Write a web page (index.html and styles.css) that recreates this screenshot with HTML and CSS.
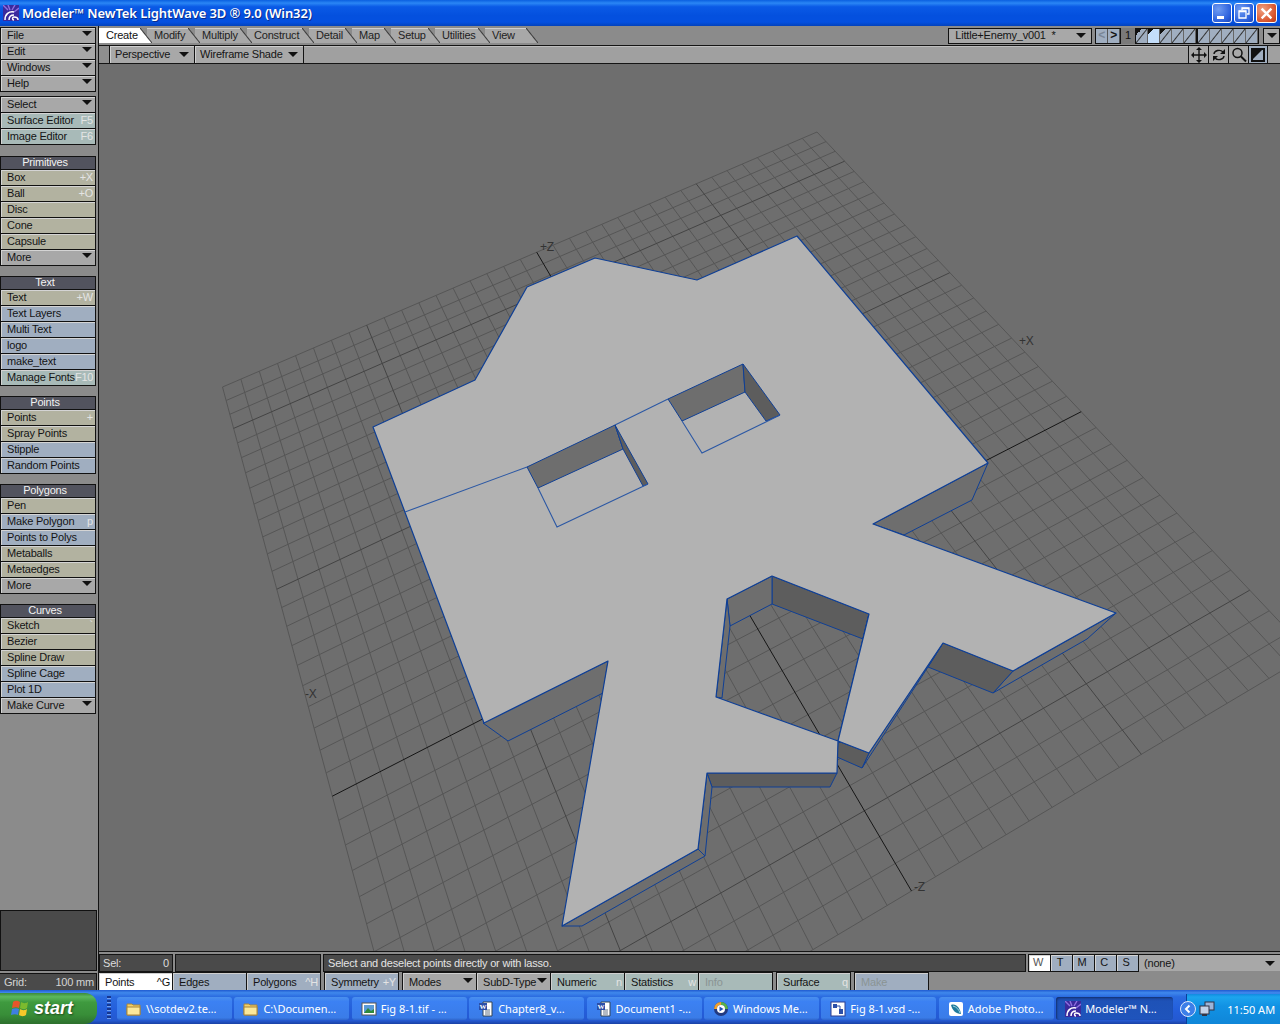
FILE: index.html
```html
<!DOCTYPE html>
<html lang="en">
<head>
    <meta charset="UTF-8">
    <title>Modeler NewTek LightWave 3D 9.0</title>
    <link rel="stylesheet" href="styles.css">
</head>
<body>
<div class="window">

    <!-- XP title bar -->
    <div class="titlebar">
        <svg class="lw-icon" viewBox="0 0 16 16"><rect width="16" height="16" fill="#3a2a9c"/><path d="M0 0l5 5M5 0l2 5M12 0l-3 5M16 3l-5 4" stroke="#8f6fe0" stroke-width="1.4"/><path d="M2 15c0-6 4-9 9-8M6 15c0-4 2-5 5-5M11 15c-2 0-2-3 0-3s4 1 4 3" fill="none" stroke="#fff" stroke-width="1.5"/></svg>
        <span class="title-text">Modeler™ NewTek LightWave 3D ® 9.0 (Win32)</span>
        <div class="win-buttons">
            <div class="win-btn"><span class="min-glyph"></span></div>
            <div class="win-btn"><svg viewBox="0 0 12 12" width="12" height="12"><path d="M4 3V1h7v6H9M1 4h7v7H1z" fill="none" stroke="#fff" stroke-width="1.3"/><path d="M4 1.5h7M1 4.5h7" stroke="#fff" stroke-width="1.6"/></svg></div>
            <div class="win-btn close"><svg viewBox="0 0 12 12" width="13" height="13"><path d="M1.5 1.5l9 9M10.5 1.5l-9 9" stroke="#fff" stroke-width="2.2"/></svg></div>
        </div>
    </div>

    <div class="workarea">

        <!-- left tool column -->
        <div class="sidebar">
            <div class="group first">
                <div class="btn grey">File<i class="arrow"></i></div>
                <div class="btn grey">Edit<i class="arrow"></i></div>
                <div class="btn grey">Windows<i class="arrow"></i></div>
                <div class="btn grey">Help<i class="arrow"></i></div>
            </div>
            <div class="group second">
                <div class="btn grey">Select<i class="arrow"></i></div>
                <div class="btn teal">Surface Editor<span class="key">F5</span></div>
                <div class="btn teal">Image Editor<span class="key">F6</span></div>
            </div>
            <div class="group third">
                <div class="heading">Primitives</div>
                <div class="btn tan">Box<span class="key">+X</span></div>
                <div class="btn tan">Ball<span class="key">+O</span></div>
                <div class="btn tan">Disc</div>
                <div class="btn tan">Cone</div>
                <div class="btn tan">Capsule</div>
                <div class="btn grey">More<i class="arrow"></i></div>
            </div>
            <div class="group">
                <div class="heading">Text</div>
                <div class="btn tan">Text<span class="key">+W</span></div>
                <div class="btn blue">Text Layers</div>
                <div class="btn blue">Multi Text</div>
                <div class="btn blue">logo</div>
                <div class="btn blue">make_text</div>
                <div class="btn teal">Manage Fonts<span class="key">F10</span></div>
            </div>
            <div class="group">
                <div class="heading">Points</div>
                <div class="btn tan">Points<span class="key">+</span></div>
                <div class="btn tan">Spray Points</div>
                <div class="btn blue">Stipple</div>
                <div class="btn blue">Random Points</div>
            </div>
            <div class="group">
                <div class="heading">Polygons</div>
                <div class="btn tan">Pen</div>
                <div class="btn blue">Make Polygon<span class="key">p</span></div>
                <div class="btn blue">Points to Polys</div>
                <div class="btn tan">Metaballs</div>
                <div class="btn tan">Metaedges</div>
                <div class="btn grey">More<i class="arrow"></i></div>
            </div>
            <div class="group">
                <div class="heading">Curves</div>
                <div class="btn tan">Sketch<span class="key">`</span></div>
                <div class="btn tan">Bezier</div>
                <div class="btn tan">Spline Draw</div>
                <div class="btn blue">Spline Cage</div>
                <div class="btn blue">Plot 1D</div>
                <div class="btn grey">Make Curve<i class="arrow"></i></div>
            </div>
            <div class="preview"></div>
            <div class="grid-size"><span>Grid:</span><span>100 mm</span></div>
        </div>

        <div class="main">
            <!-- tab row plus the object and layer controls -->
            <div class="tabrow">
                <div class="tabs">
                    <div class="tab active">Create</div>
                    <div class="tab">Modify</div>
                    <div class="tab">Multiply</div>
                    <div class="tab">Construct</div>
                    <div class="tab">Detail</div>
                    <div class="tab">Map</div>
                    <div class="tab">Setup</div>
                    <div class="tab">Utilities</div>
                    <div class="tab">View</div>
                </div>
                <div class="object-select">Little+Enemy_v001 &nbsp;*<i class="arrow"></i></div>
                <div class="layer-nav">
                    <div class="nav-btn off">&lt;</div>
                    <div class="nav-btn">&gt;</div>
                </div>
                <div class="layer-num">1</div>
                <div class="layers">
                    <div class="layer fg"></div>
                    <div class="layer bg"></div>
                    <div class="layer fg"></div>
                    <div class="layer"></div>
                    <div class="layer"></div>
                </div>
                <div class="layers next">
                    <div class="layer"></div>
                    <div class="layer"></div>
                    <div class="layer"></div>
                    <div class="layer"></div>
                    <div class="layer"></div>
                </div>
                <div class="layer-menu"><i class="arrow"></i></div>
            </div>

            <!-- viewport toolbar -->
            <div class="viewbar">
                <div class="vb-first"></div>
                <div class="vb-select persp">Perspective<i class="arrow"></i></div>
                <div class="vb-select shade">Wireframe Shade<i class="arrow"></i></div>
                <div class="vb-fill"></div>
                <div class="vb-icon"><svg viewBox="0 0 16 16" width="16" height="16"><path d="M8 1v14M1 8h14" stroke="#111" stroke-width="1.4"/><path d="M8 0l3 3H5zM8 16l3-3H5zM0 8l3-3v6zM16 8l-3-3v6z" fill="#111"/></svg></div>
                <div class="vb-icon"><svg viewBox="0 0 16 16" width="16" height="16"><path d="M3 7a5 4 0 0 1 9-2M13 9a5 4 0 0 1-9 2" fill="none" stroke="#111" stroke-width="1.4"/><path d="M14 2v5h-5zM2 14V9h5z" fill="#111"/></svg></div>
                <div class="vb-icon"><svg viewBox="0 0 16 16" width="16" height="16"><circle cx="6.500" cy="6" r="4.500" fill="none" stroke="#111" stroke-width="1.500"/><path d="M10 9.500l5 5" stroke="#111" stroke-width="2"/></svg></div>
                <div class="vb-icon on"><svg viewBox="0 0 16 16" width="16" height="16"><rect x="2" y="2" width="12" height="12" fill="none" stroke="#111" stroke-width="2"/><path d="M3 3h9L3 12z" fill="#111"/></svg></div>
                <div class="vb-end"></div>
            </div>

            <!-- perspective viewport, drawn in page coordinates -->
            <svg class="viewport" id="viewport" viewBox="99 64 1181 887">
                <g id="floor"></g>

                <g class="labels">
                    <text x="540" y="251">+Z</text>
                    <text x="1019" y="345">+X</text>
                    <text x="305" y="698">-X</text>
                    <text x="914" y="891">-Z</text>
                </g>

                <!-- outer walls -->
                <polygon class="wall" points="873,524 988,463 972,500 904,535"/>
                <polygon class="wall" points="1013,671 1116,613 1087,639 993,693"/>
                <polygon class="wall dark" points="943,643 1013,671 993,693 928,667"/>
                <polygon class="wall" points="869,753 943,643 928,667 862,768"/>
                <polygon class="wall dark" points="838,741 869,753 862,768 837,757"/>
                <polygon class="wall dark" points="707,773 837,773 830,787 712,787"/>
                <polygon class="wall" points="707,773 712,787 705,856 698,849"/>
                <polygon class="wall" points="698,849 705,856 582,926 562,926"/>
                <polygon class="wall" points="608,661 603,693 508,741 483,723"/>

                <!-- walls of the big opening -->
                <polygon class="wall dark" points="772,576 869,614 863,639 772,604"/>
                <polygon class="wall" points="727,599 772,576 772,604 730,626"/>
                <polygon class="wall" points="727,599 730,626 722,698 716,697"/>
                <polygon class="wall" points="869,614 863,639 840,743 838,741"/>

                <!-- top face with the opening cut out -->
                <path class="face" fill-rule="evenodd" d="M373 427L475 380L527 287L595 258L697 280L797 236L988 463L873 524L1116 613L1013 671L943 643L869 753L838 741L837 773L707 773L698 849L562 926L608 661L484 723ZM772 576L869 614L838 741L716 697L727 599Z"/>

                <!-- crease across the face -->
                <polyline class="crease" points="405,512 527,467"/>
                <polyline class="crease" points="615,425 668,399"/>

                <!-- left window -->
                <polygon class="wall" points="527,467 615,425 623,449 538,488"/>
                <polygon class="wall dark" points="615,425 648,484 643,486 623,449"/>
                <polyline class="crease" points="538,488 557,527 648,484"/>

                <!-- right window -->
                <polygon class="wall" points="668,399 743,364 745,392 682,421"/>
                <polygon class="wall dark" points="743,364 780,415 766,421 745,392"/>
                <polyline class="crease" points="682,421 702,453 780,415"/>
            </svg>

            <!-- status line -->
            <div class="statusrow">
                <div class="readout sel"><span>Sel:</span><span>0</span></div>
                <div class="readout blank"></div>
                <div class="readout message">Select and deselect points directly or with lasso.</div>
                <div class="wtmcs">
                    <div class="wt on">W</div>
                    <div class="wt">T</div>
                    <div class="wt">M</div>
                    <div class="wt">C</div>
                    <div class="wt">S</div>
                </div>
                <div class="none-select">(none)<i class="arrow"></i></div>
            </div>

            <!-- selection modes and bottom buttons -->
            <div class="moderow">
                <div class="mode-group no-left">
                    <div class="mode white">Points<span class="mkey">^G</span></div>
                    <div class="mode blue">Edges</div>
                    <div class="mode blue">Polygons<span class="mkey">^H</span></div>
                </div>
                <div class="mode-group">
                    <div class="mode blue">Symmetry<span class="mkey">+Y</span></div>
                </div>
                <div class="mode-group">
                    <div class="mode grey">Modes<i class="arrow"></i></div>
                    <div class="mode grey">SubD-Type<i class="arrow"></i></div>
                    <div class="mode teal">Numeric<span class="mkey">n</span></div>
                    <div class="mode teal">Statistics<span class="mkey">w</span></div>
                    <div class="mode teal dim">Info</div>
                </div>
                <div class="mode-group">
                    <div class="mode teal">Surface<span class="mkey">q</span></div>
                </div>
                <div class="mode-group">
                    <div class="mode blue dim">Make</div>
                </div>
            </div>
        </div>
    </div>

    <!-- XP taskbar -->
    <div class="taskbar">
        <div class="start">
            <svg class="flag" viewBox="0 0 20 20" width="20" height="20"><path d="M3 3c3-2 5-1 7 0l-1 6C7 8 5 8 2 9z" fill="#e8552a"/><path d="M11 3c2 1 4 2 7 0l-1 6c-3 2-5 1-7 0z" fill="#7cbb2e"/><path d="M2 10c3-1 5-1 7 0l-1 6c-2-1-4-1-7 0z" fill="#3f7fe0"/><path d="M10 10c2 1 4 2 7 0l-1 6c-3 2-5 1-7 0z" fill="#f5c82a"/></svg>
            <span>start</span>
        </div>
        <div class="grip"></div>
        <div class="tasks">
            <div class="task"><svg class="ticon" viewBox="0 0 16 16"><path d="M1 3h5l1 1h7v10H1z" fill="#f3d06a" stroke="#a8853a"/><path d="M1 6h13v8H1z" fill="#fbe89a" stroke="#a8853a"/></svg><span>\\sotdev2.te…</span></div>
            <div class="task"><svg class="ticon" viewBox="0 0 16 16"><path d="M1 3h5l1 1h7v10H1z" fill="#f3d06a" stroke="#a8853a"/><path d="M1 6h13v8H1z" fill="#fbe89a" stroke="#a8853a"/></svg><span>C:\Documen…</span></div>
            <div class="task"><svg class="ticon" viewBox="0 0 16 16"><rect x="1" y="2" width="14" height="12" fill="#fff" stroke="#555"/><rect x="3" y="4" width="10" height="8" fill="#5a9ad8"/><path d="M3 12l4-5 3 3 3-2v4z" fill="#2f8a3a"/></svg><span>Fig 8-1.tif - …</span></div>
            <div class="task"><svg class="ticon" viewBox="0 0 16 16"><path d="M5 1h9v14H5z" fill="#fff" stroke="#345"/><path d="M7 9h5M7 11h5M7 13h5" stroke="#678"/><rect x="1" y="2" width="8" height="7" fill="#2c4fa8"/><text class="ticon-letter" x="5" y="8">W</text></svg><span>Chapter8_v…</span></div>
            <div class="task"><svg class="ticon" viewBox="0 0 16 16"><path d="M5 1h9v14H5z" fill="#fff" stroke="#345"/><path d="M7 9h5M7 11h5M7 13h5" stroke="#678"/><rect x="1" y="2" width="8" height="7" fill="#2c4fa8"/><text class="ticon-letter" x="5" y="8">W</text></svg><span>Document1 -…</span></div>
            <div class="task"><svg class="ticon" viewBox="0 0 16 16"><circle cx="8" cy="8" r="7" fill="#223a80"/><path d="M8 1a7 7 0 0 1 7 7h-3a4 4 0 0 0-4-4z" fill="#5ab04a"/><path d="M1 8a7 7 0 0 1 7-7v3a4 4 0 0 0-4 4z" fill="#f0a030"/><circle cx="8" cy="8" r="4" fill="#fff"/><path d="M6.500 5.500l4 2.500-4 2.500z" fill="#2450b0"/></svg><span>Windows Me…</span></div>
            <div class="task"><svg class="ticon" viewBox="0 0 16 16"><rect x="1" y="1" width="14" height="14" fill="#fff" stroke="#2c3f90"/><path d="M3 3h4v4H3zM9 8h4v5H9z" fill="#2c4fa8"/><path d="M7 5h3v3" fill="none" stroke="#2c4fa8"/></svg><span>Fig 8-1.vsd -…</span></div>
            <div class="task"><svg class="ticon" viewBox="0 0 16 16"><rect x="1" y="1" width="14" height="14" rx="2" fill="#fff"/><path d="M3 4c5-2 9 3 10 9C8 13 4 9 3 4z" fill="#1f7a9c"/><path d="M5 5c4 1 6 4 7 7" stroke="#9ed4e0" fill="none"/></svg><span>Adobe Photo…</span></div>
            <div class="task active"><svg class="ticon" viewBox="0 0 16 16"><rect width="16" height="16" fill="#3a2a9c"/><path d="M0 0l5 5M5 0l2 5M12 0l-3 5M16 3l-5 4" stroke="#8f6fe0" stroke-width="1.4"/><path d="M2 15c0-6 4-9 9-8M6 15c0-4 2-5 5-5M11 15c-2 0-2-3 0-3s4 1 4 3" fill="none" stroke="#fff" stroke-width="1.5"/></svg><span>Modeler™ N…</span></div>
        </div>
        <div class="tray">
            <div class="chevron"><svg viewBox="0 0 10 10" width="10" height="10"><path d="M6.500 1.500L3 5l3.500 3.500" fill="none" stroke="#fff" stroke-width="2"/></svg></div>
            <svg class="net" viewBox="0 0 16 16" width="16" height="16"><rect x="6" y="1" width="9" height="8" fill="#9db4d8" stroke="#334"/><rect x="1" y="5" width="9" height="8" fill="#c4d2e8" stroke="#334"/><rect x="3" y="13" width="5" height="2" fill="#334"/></svg>
            <span class="clock">11:50 AM</span>
        </div>
    </div>
</div>
<script src="grid.js"></script>
</body>
</html>
```

FILE: styles.css
```css
* {
    box-sizing: border-box;
}

html, body {
    margin: 0;
    padding: 0;
    overflow: hidden;
}

body {
    font-family: "Liberation Sans", Arial, sans-serif;
    font-size: 11px;
    letter-spacing: -0.2px;
    color: #141414;
}

.window {
    width: 1280px;
    height: 1024px;
    display: flex;
    flex-direction: column;
    background-color: #8b8b8b;
    overflow: hidden;
}

.arrow {
    display: block;
    width: 0;
    height: 0;
    border-left: 5px solid transparent;
    border-right: 5px solid transparent;
    border-top: 5px solid #111;
}

/* title bar */
.titlebar {
    height: 26px;
    flex: none;
    display: flex;
    align-items: center;
    padding-left: 3px;
    background: linear-gradient(#0a5fe0 0%, #2a86f5 12%, #0a5ae6 26%, #0450de 60%, #0450e0 85%, #0342bb 100%);
}

.lw-icon {
    width: 16px;
    height: 16px;
    flex: none;
}

.title-text {
    margin-left: 3px;
    color: #fff;
    font-family: "Noto Sans", sans-serif;
    font-size: 13px;
    font-weight: 600;
    letter-spacing: -0.1px;
    text-shadow: 1px 1px 0 #0a2d8c;
    white-space: nowrap;
}

.win-buttons {
    margin-left: auto;
    margin-right: 3px;
    display: flex;
    gap: 2px;
}

.win-btn {
    width: 20px;
    height: 20px;
    border: 1px solid #fff;
    border-radius: 3px;
    display: flex;
    align-items: center;
    justify-content: center;
    background: radial-gradient(circle at 30% 30%, #6f9cf2, #2a5fdc 70%, #1c44b4);
}

.win-btn.close {
    width: 21px;
    background: radial-gradient(circle at 30% 30%, #f0a080, #d8532c 70%, #b83a18);
}

.min-glyph {
    width: 7px;
    height: 3px;
    margin-top: 8px;
    margin-right: 3px;
    background-color: #fff;
}

.workarea {
    flex: 1;
    display: flex;
    min-height: 0;
}

/* left tool column */
.sidebar {
    width: 99px;
    flex: none;
    display: flex;
    flex-direction: column;
    padding-top: 1px;
    border-right: 1px solid #141414;
}

.group {
    width: 96px;
    margin-top: 10px;
    border: 1px solid #111;
    border-bottom: none;
}

.group.first {
    margin-top: 0;
}

.group.second {
    margin-top: 4px;
}

.group.third {
    margin-top: 11px;
}

.heading {
    height: 13px;
    line-height: 11px;
    padding-right: 6px;
    text-align: center;
    color: #f2f2f2;
    background-color: #52535e;
    border-bottom: 1px solid #111;
}

.btn {
    height: 16px;
    display: flex;
    align-items: center;
    justify-content: space-between;
    padding: 0 2px 1px 6px;
    border-bottom: 1px solid #111;
    box-shadow: inset 1px 1px 0 #d4d4d4;
    white-space: nowrap;
}

.btn .arrow {
    margin-right: 1px;
    margin-top: -3px;
}

.key {
    color: #e4e4e4;
}

.grey {
    background-color: #a8a8a8;
}

.tan {
    background-color: #b2b2a0;
}

.blue {
    background-color: #a0aec0;
}

.teal {
    background-color: #a8bab8;
}

.preview {
    width: 97px;
    height: 61px;
    margin-top: auto;
    background-color: #4a4a4a;
    border: 1px solid #111;
}

.grid-size {
    width: 97px;
    height: 17px;
    margin-top: 2px;
    display: flex;
    justify-content: space-between;
    align-items: center;
    padding: 0 2px 0 4px;
    color: #d4d4d4;
    background-color: #4a4a4a;
    border-top: 1px solid #111;
    border-right: 1px solid #111;
}

.main {
    flex: 1;
    min-width: 0;
    display: flex;
    flex-direction: column;
}

/* tabs and layers */
.tabrow {
    height: 19px;
    flex: none;
    display: flex;
    align-items: flex-start;
    padding-top: 2px;
}

.tabs {
    display: grid;
    grid-template-columns: 48px 48px 52px 62px 43px 39px 44px 50px 48px;
    width: 851px;
}

.tab {
    height: 15px;
    margin-right: -5px;
    padding-left: 7px;
    line-height: 14px;
    color: #222;
    background:
        linear-gradient(#cfcfcf, #cfcfcf) left top / calc(100% - 12px) 1px no-repeat,
        linear-gradient(#a8a8a8, #a8a8a8) left top / calc(100% - 12px) 100% no-repeat,
        linear-gradient(to top right, #a8a8a8 calc(50% - 1px), #3a3a3a 50%, transparent calc(50% + 1px)) right top / 12px 100% no-repeat;
}

/* each tab lies over the one to its right */
.tab:nth-child(1) { z-index: 9; }
.tab:nth-child(2) { z-index: 8; }
.tab:nth-child(3) { z-index: 7; }
.tab:nth-child(4) { z-index: 6; }
.tab:nth-child(5) { z-index: 5; }
.tab:nth-child(6) { z-index: 4; }
.tab:nth-child(7) { z-index: 3; }
.tab:nth-child(8) { z-index: 2; }
.tab:nth-child(9) { z-index: 1; }

.tab.active {
    color: #111;
    background:
        linear-gradient(#fff, #fff) left top / calc(100% - 12px) 100% no-repeat,
        linear-gradient(to top right, #fff calc(50% - 1px), #3a3a3a 50%, transparent calc(50% + 1px)) right top / 12px 100% no-repeat;
}

.object-select {
    width: 144px;
    height: 16px;
    display: flex;
    align-items: center;
    justify-content: space-between;
    padding: 0 5px 2px 6px;
    background-color: #a8a8a8;
    border: 1px solid #111;
}

.layer-nav {
    display: flex;
    margin-left: 3px;
    border: 1px solid #111;
    height: 16px;
}

.nav-btn {
    width: 12px;
    line-height: 13px;
    text-align: center;
    font-weight: bold;
    font-size: 12px;
    background-color: #a0aec0;
    border-right: 1px solid #555;
}

.nav-btn.off {
    color: #7a8696;
}

.layer-num {
    width: 14px;
    height: 16px;
    line-height: 15px;
    text-align: center;
    background-color: #7a7a7a;
    color: #111;
}

.layers {
    display: flex;
    height: 16px;
    border: 1px solid #111;
}

.layer {
    width: 12px;
    background: linear-gradient(to top left, #a0aec0 calc(50% - 1px), #333 50%, #a0aec0 calc(50% + 1px));
    border-right: 1px solid #666;
}

.layer.fg {
    background:
        linear-gradient(135deg, #111 50%, transparent 50%) left top / 6px 6px no-repeat,
        linear-gradient(to top left, #a0aec0 calc(50% - 1px), #333 50%, #a0aec0 calc(50% + 1px));
}

.layer.bg {
    background:
        linear-gradient(135deg, #111 50%, transparent 50%) left top / 5px 5px no-repeat,
        #c4defa;
}

.layer-menu {
    width: 17px;
    height: 16px;
    margin-left: 4px;
    padding: 4px 0 0 3px;
    background-color: #a8a8a8;
    border: 1px solid #111;
}

/* viewport toolbar */
.viewbar {
    height: 19px;
    flex: none;
    display: flex;
    background-color: #a0a0a0;
    border-top: 1px solid #141414;
    border-bottom: 1px solid #141414;
}

.vb-first {
    width: 11px;
    border-right: 1px solid #141414;
    background-color: #8f8f8f;
}

.vb-select {
    display: flex;
    align-items: center;
    justify-content: space-between;
    padding: 0 5px 1px 5px;
    background-color: #a8a8a8;
    border-right: 1px solid #141414;
    box-shadow: inset 1px 1px 0 #d0d0d0;
}

.persp {
    width: 85px;
}

.shade {
    width: 109px;
}

.vb-fill {
    flex: 1;
    box-shadow: inset 0 1px 0 #bdbdbd;
}

.vb-icon {
    width: 20px;
    display: flex;
    align-items: center;
    justify-content: center;
    background-color: #a8a8a8;
    border-left: 1px solid #141414;
}

.vb-icon.on {
    background-color: #a0aec0;
    border-right: 1px solid #141414;
}

.vb-end {
    width: 12px;
}

/* 3D view */
.viewport {
    display: block;
    width: 1181px;
    height: 887px;
    flex: none;
    background-color: #6e6e6e;
}

.grid-minor {
    stroke: #565656;
    stroke-width: 1;
}

.grid-major {
    stroke: #444;
    stroke-width: 1;
}

.grid-axis {
    stroke: #161616;
    stroke-width: 1;
}

.labels text {
    font-size: 12px;
    fill: #333;
}

.wall {
    fill: #6e6e6e;
    stroke: #0f3f95;
    stroke-width: 1;
    stroke-linejoin: round;
}

.wall.dark {
    fill: #5d5d5d;
}

.face {
    fill: #b2b2b2;
    stroke: #0f3f95;
    stroke-width: 1.2;
    stroke-linejoin: round;
}

.crease {
    fill: none;
    stroke: #2c58a4;
    stroke-width: 1.1;
}

/* status line */
.statusrow {
    height: 21px;
    flex: none;
    display: flex;
    padding-top: 2px;
    border-top: 1px solid #141414;
}

.readout {
    height: 18px;
    display: flex;
    align-items: center;
    color: #dcdcdc;
    background-color: #4a4a4a;
    border: 1px solid #141414;
}

.sel {
    width: 74px;
    justify-content: space-between;
    padding: 0 3px;
}

.blank {
    width: 146px;
    margin-left: 2px;
}

.message {
    width: 703px;
    margin-left: 2px;
    padding-left: 4px;
    color: #e4e4e4;
}

.wtmcs {
    display: flex;
    margin-left: 2px;
    height: 18px;
    border: 1px solid #141414;
    border-right: none;
}

.wt {
    width: 22px;
    padding-right: 3px;
    line-height: 15px;
    text-align: center;
    background-color: #a0aec0;
    border-right: 1px solid #141414;
    box-shadow: inset 1px 1px 0 #d4d4d4;
}

.wt.on {
    background-color: #fff;
    color: #555;
}

.none-select {
    flex: 1;
    height: 17px;
    display: flex;
    align-items: center;
    justify-content: space-between;
    padding: 0 5px;
    background-color: #a8a8a8;
    border-top: 1px solid #141414;
}

/* mode buttons */
.moderow {
    height: 18px;
    flex: none;
    display: flex;
}

.mode-group {
    display: flex;
    margin-left: 3px;
    border: 1px solid #141414;
    border-bottom: none;
}

.mode-group.no-left {
    margin-left: 0;
    border-left: none;
}

.mode {
    width: 74px;
    display: flex;
    align-items: center;
    justify-content: space-between;
    padding: 0 2px 0 6px;
    border-right: 1px solid #141414;
    box-shadow: inset 1px 1px 0 #cfcfcf;
    white-space: nowrap;
}

.mode-group .mode:last-child {
    width: 73px;
    border-right: none;
}

.mode.dim {
    color: #8a9494;
}

.mode.white {
    background-color: #fff;
}

.mkey {
    color: #e4e4e4;
}

.mode.white .mkey {
    color: #111;
}

.mode .arrow {
    margin-top: -3px;
    margin-right: 1px;
}

/* taskbar */
.taskbar {
    height: 34px;
    flex: none;
    display: flex;
    align-items: stretch;
    font-family: "Noto Sans", sans-serif;
    font-size: 11px;
    letter-spacing: 0;
    color: #fff;
    background: linear-gradient(#1f5ad0 0%, #3f88ec 8%, #2a6be0 20%, #245edb 60%, #2458d0 90%, #1941a5 100%);
}

.start {
    width: 97px;
    margin-top: 3px;
    display: flex;
    align-items: center;
    padding-left: 10px;
    gap: 4px;
    border-radius: 0 12px 12px 0;
    background: linear-gradient(#3c8a3c 0%, #5cb85c 12%, #3f9a3f 30%, #388e38 70%, #2d6f2d 100%);
    font-family: "Liberation Sans", sans-serif;
    font-size: 18px;
    font-weight: bold;
    font-style: italic;
    text-shadow: 1px 1px 2px #1c4a1c;
}

.grip {
    width: 4px;
    margin: 6px 0 4px 10px;
    background: repeating-linear-gradient(#17378f 0 2px, #6f9ff0 2px 3px, transparent 3px 4px);
}

.tasks {
    display: flex;
    gap: 2.4px;
    margin-left: 6px;
    padding-top: 7px;
    padding-bottom: 4px;
}

.task {
    width: 115px;
    display: flex;
    align-items: center;
    gap: 4px;
    padding-left: 9px;
    border-radius: 3px;
    background: linear-gradient(#4a90ee, #3c81f3 20%, #3a7ce8 90%, #2f66cc);
    white-space: nowrap;
    overflow: hidden;
}

.task.active {
    width: 117px;
    background: linear-gradient(#1c49a8, #1e52b7 20%, #1f54bc);
    box-shadow: inset 1px 1px 2px #14316e;
}

.ticon {
    width: 16px;
    height: 16px;
    flex: none;
}

.ticon-letter {
    font-family: "Liberation Serif", serif;
    font-size: 7px;
    font-weight: bold;
    fill: #fff;
    text-anchor: middle;
}

.tray {
    flex: 1;
    margin-left: 13px;
    margin-top: 4px;
    display: flex;
    align-items: center;
    gap: 1px;
    background: linear-gradient(#128ae0 0%, #1ca5ee 10%, #1292e4 40%, #0f86d8 100%);
    border-left: 1px solid #0a3f9a;
}

.chevron {
    width: 16px;
    height: 16px;
    margin-left: -7px;
    display: flex;
    align-items: center;
    justify-content: center;
    border-radius: 50%;
    background-color: #3c7fe8;
    border: 1px solid #dfe9fb;
}

.net {
    margin-left: 2px;
}

.clock {
    margin-left: 11px;
}
```

FILE: grid.js
```js
// floor grid: 36 x 36 cells seen in perspective, corners read off the picture
const corners = [[222.5, 387], [817, 132], [1310, 654], [434, 1175]];
const cells = 36;
const majorU = [8, 28];
const majorV = [3, 13, 33];
const axisU = 18;
const axisV = 23;

function makeProjector(p) {
    const dx1 = p[1][0] - p[2][0];
    const dx2 = p[3][0] - p[2][0];
    const dy1 = p[1][1] - p[2][1];
    const dy2 = p[3][1] - p[2][1];
    const sx = p[0][0] - p[1][0] + p[2][0] - p[3][0];
    const sy = p[0][1] - p[1][1] + p[2][1] - p[3][1];
    const den = dx1 * dy2 - dx2 * dy1;
    const g = (sx * dy2 - dx2 * sy) / den;
    const h = (dx1 * sy - sx * dy1) / den;
    const a = p[1][0] - p[0][0] + g * p[1][0];
    const b = p[3][0] - p[0][0] + h * p[3][0];
    const d = p[1][1] - p[0][1] + g * p[1][1];
    const e = p[3][1] - p[0][1] + h * p[3][1];

    return function(u, v) {
        const w = g * u + h * v + 1;
        return [(a * u + b * v + p[0][0]) / w, (d * u + e * v + p[0][1]) / w];
    };
}

function addLine(parent, from, to, cls) {
    const line = document.createElementNS('http://www.w3.org/2000/svg', 'line');
    line.setAttribute('x1', from[0].toFixed(1));
    line.setAttribute('y1', from[1].toFixed(1));
    line.setAttribute('x2', to[0].toFixed(1));
    line.setAttribute('y2', to[1].toFixed(1));
    line.setAttribute('class', cls);
    parent.appendChild(line);
}

function lineClass(i, majors, axis) {
    if (i === axis) return 'grid-axis';
    if (majors.includes(i)) return 'grid-major';
    return 'grid-minor';
}

const project = makeProjector(corners);
const floor = document.getElementById('floor');

// minor lines first so the darker ones stay on top
['grid-minor', 'grid-major', 'grid-axis'].forEach(function(pass) {
    for (let i = 0; i <= cells; i++) {
        const t = i / cells;
        if (lineClass(i, majorU, axisU) === pass) {
            addLine(floor, project(t, 0), project(t, 1), pass);
        }
        if (lineClass(i, majorV, axisV) === pass) {
            addLine(floor, project(0, t), project(1, t), pass);
        }
    }
});
```
